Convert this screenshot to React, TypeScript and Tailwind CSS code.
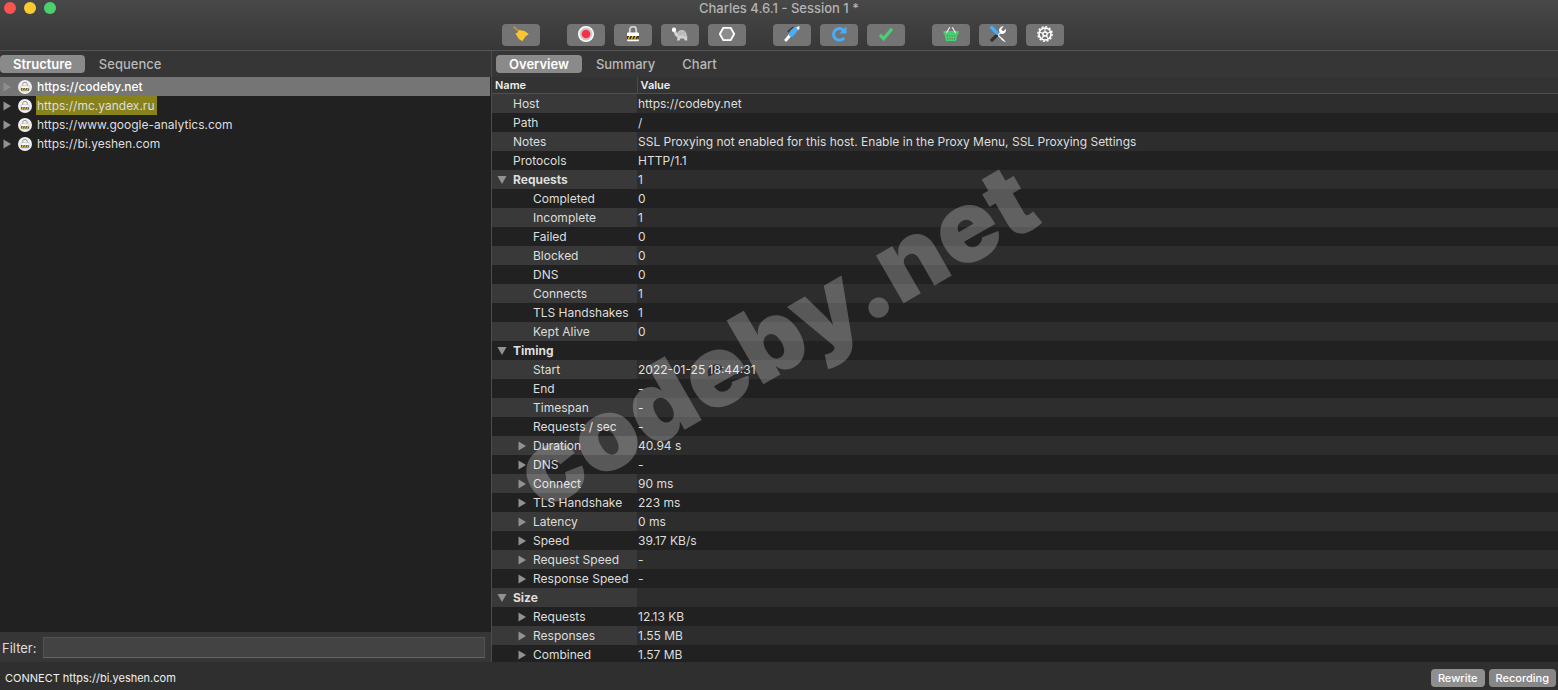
import { useState, type ReactNode } from "react";
import clsx from "clsx";

interface DetailRow {
  name: string;
  value: string;
  level: 0 | 1;
  toggle?: "open" | "closed";
}

interface HostEntry {
  url: string;
  highlighted?: boolean;
}

interface Tool {
  label: string;
  icon: ReactNode;
}

const hosts: HostEntry[] = [
  { url: "https://codeby.net" },
  { url: "https://mc.yandex.ru", highlighted: true },
  { url: "https://www.google-analytics.com" },
  { url: "https://bi.yeshen.com" },
];

const details: DetailRow[] = [
  { name: "Host", value: "https://codeby.net", level: 0 },
  { name: "Path", value: "/", level: 0 },
  {
    name: "Notes",
    value: "SSL Proxying not enabled for this host. Enable in the Proxy Menu, SSL Proxying Settings",
    level: 0,
  },
  { name: "Protocols", value: "HTTP/1.1", level: 0 },
  { name: "Requests", value: "1", level: 0, toggle: "open" },
  { name: "Completed", value: "0", level: 1 },
  { name: "Incomplete", value: "1", level: 1 },
  { name: "Failed", value: "0", level: 1 },
  { name: "Blocked", value: "0", level: 1 },
  { name: "DNS", value: "0", level: 1 },
  { name: "Connects", value: "1", level: 1 },
  { name: "TLS Handshakes", value: "1", level: 1 },
  { name: "Kept Alive", value: "0", level: 1 },
  { name: "Timing", value: "", level: 0, toggle: "open" },
  { name: "Start", value: "2022-01-25 18:44:31", level: 1 },
  { name: "End", value: "-", level: 1 },
  { name: "Timespan", value: "-", level: 1 },
  { name: "Requests / sec", value: "-", level: 1 },
  { name: "Duration", value: "40.94 s", level: 1, toggle: "closed" },
  { name: "DNS", value: "-", level: 1, toggle: "closed" },
  { name: "Connect", value: "90 ms", level: 1, toggle: "closed" },
  { name: "TLS Handshake", value: "223 ms", level: 1, toggle: "closed" },
  { name: "Latency", value: "0 ms", level: 1, toggle: "closed" },
  { name: "Speed", value: "39.17 KB/s", level: 1, toggle: "closed" },
  { name: "Request Speed", value: "-", level: 1, toggle: "closed" },
  { name: "Response Speed", value: "-", level: 1, toggle: "closed" },
  { name: "Size", value: "", level: 0, toggle: "open" },
  { name: "Requests", value: "12.13 KB", level: 1, toggle: "closed" },
  { name: "Responses", value: "1.55 MB", level: 1, toggle: "closed" },
  { name: "Combined", value: "1.57 MB", level: 1, toggle: "closed" },
];

function Icon({ children }: { children: ReactNode }) {
  return (
    <svg viewBox="0 0 16 16" className="size-4" fill="none" aria-hidden="true">
      {children}
    </svg>
  );
}

const toolGroups: Tool[][] = [
  [
    {
      label: "Clear session",
      icon: (
        <Icon>
          <path d="M1 1.2 6 5.4" stroke="#c98a3c" strokeWidth="1.8" strokeLinecap="round" />
          <path d="M1.6 1 4 3" stroke="#6fbf73" strokeWidth="0.8" />
          <path d="M6 4 11.4 5 15.8 8 12.2 10.8 9.4 15.2 5.9 12.9 2.4 7.6 4.4 6.8Z" fill="#fbc62d" />
        </Icon>
      ),
    },
  ],
  [
    {
      label: "Record",
      icon: (
        <Icon>
          <circle cx="8" cy="8" r="7.2" fill="#c9c9c9" stroke="#fff" strokeWidth="1.6" />
          <circle cx="8" cy="8" r="4.3" fill="#f7304a" />
        </Icon>
      ),
    },
    {
      label: "SSL proxying",
      icon: (
        <Icon>
          <path d="M4.8 7.5V3.8a3.2 3.2 0 0 1 6.4 0v3.7" stroke="#d4d4d4" strokeWidth="1.8" />
          <rect x="2" y="6.4" width="12" height="8.8" rx="1" fill="#fff" />
          <path d="M2 10h12v3.4H2z" fill="#2b2b2b" />
          <path d="m2.4 13.4 1.6-3.4h1.4l-1.6 3.4zm3.2 0L7.2 10h1.4L7 13.4zm3.2 0 1.6-3.4h1.4l-1.6 3.4zm3.2 0 1.2-2.6v2.6z" fill="#f4c51f" />
        </Icon>
      ),
    },
    {
      label: "Throttle",
      icon: (
        <Icon>
          <path d="M4.8 9.8C4.8 5.4 7.2 4 10 4S14.7 6.2 14.9 10.2Z" fill="#c2c2c2" />
          <path d="M6.8 7h6M9 4.8v4.8M12 5v4.6" stroke="#a3a3a3" strokeWidth="0.4" />
          <path d="M3.8 4.2 6 9.4l9.8 1-.8 1.3.4 2.7h-2.8l-.6-1.8H8.4l-.8 1.8H4.8l.8-2.7L3 9.4 1.6 6Z" fill="#d2d2d2" />
          <circle cx="2" cy="3.8" r="2.2" fill="#fafafa" />
        </Icon>
      ),
    },
    {
      label: "Breakpoints",
      icon: (
        <Icon>
          <path d="M4.3 1.9h7.4L15.2 8l-3.5 6.1H4.3L.8 8Z" fill="#8c8c8c" stroke="#fff" strokeWidth="1.9" />
        </Icon>
      ),
    },
  ],
  [
    {
      label: "Compose",
      icon: (
        <Icon>
          <path d="M3.8 6.2C5.4 3.6 7.6 1.8 10.4 1" stroke="#333" strokeWidth="1.3" />
          <path d="m2 14 5-6" stroke="#fff" strokeWidth="3" strokeLinecap="round" />
          <path d="m7.4 8.4 4-5" stroke="#47aefb" strokeWidth="5" strokeLinecap="round" />
          <path d="M12.3 1.2 15.4 0v3l-1.2 1.2Z" fill="#fff" />
        </Icon>
      ),
    },
    {
      label: "Repeat",
      icon: (
        <Icon>
          <path d="M12.4 4.2A5.8 5.8 0 1 0 13 11.8" stroke="#47aefb" strokeWidth="2.9" />
          <path d="M15.4.6v7H8.4Z" fill="#47aefb" />
        </Icon>
      ),
    },
    {
      label: "Validate",
      icon: (
        <Icon>
          <path d="m2 8.8 3.6 4L14 2.8" stroke="#48cf70" strokeWidth="3.3" />
        </Icon>
      ),
    },
  ],
  [
    {
      label: "Purchase",
      icon: (
        <Icon>
          <path d="M.5 5h15v3h-1l-1.4 7H2.9L1.5 8h-1Z" fill="#48cf70" />
          <path d="M3.4 6.8 6.8 1.2M12.6 6.8 9.2 1.2" stroke="#f0f0f0" strokeWidth="1.2" />
          <path d="M4.5 9v1.6M7 9v1.6M9.3 9v1.6M11.7 9v1.6M4.8 12v1.6M7 12v1.6M9.3 12v1.6M11.4 12v1.6" stroke="#5c7d64" strokeWidth="0.8" />
        </Icon>
      ),
    },
    {
      label: "Tools",
      icon: (
        <Icon>
          <path d="m7.3 8.4 6.4 6.2" stroke="#f5f5f5" strokeWidth="1.4" />
          <path d="m12 12.4 3.7 3.2-1 .4-3.5-2.8Z" fill="#fff" />
          <path d="m2 14 4.4-4.2" stroke="#333" strokeWidth="3.4" strokeLinecap="round" />
          <path d="m1.6 1.4 5.4 5.8" stroke="#47aefb" strokeWidth="3.4" strokeLinecap="round" />
          <path d="m8 8.5 1.7-2a4 4 0 0 1 4-6.1l-2.3 2.4.4 1.8 1.8.4 2.3-2.2a4 4 0 0 1-5.7 4.6l-1.5 1.8Z" fill="#fff" />
        </Icon>
      ),
    },
    {
      label: "Settings",
      icon: (
        <Icon>
          <circle cx="8" cy="8" r="6" stroke="#fff" strokeWidth="1.6" />
          <circle cx="8" cy="8" r="7.2" stroke="#fff" strokeWidth="1.4" strokeDasharray="2.2 1.57" />
          <circle cx="8" cy="8" r="2.1" stroke="#fff" strokeWidth="1.5" />
          <path d="M8 2v4M2.3 6.1l3.8 1.3M4.5 12.9l2.3-3.3M11.5 12.9 9.2 9.6M13.7 6.1 9.9 7.4" stroke="#fff" strokeWidth="1.1" />
        </Icon>
      ),
    },
  ],
];

function Triangle({ open, dim }: { open?: boolean; dim?: boolean }) {
  return (
    <svg
      viewBox="0 0 10 10"
      className={clsx("block size-2.5 shrink-0", dim ? "text-[#8e8e8e]" : "text-[#929292]")}
      aria-hidden="true"
    >
      <path d={open ? "M.5 1h9L5 9Z" : "M1.5 .5v9l7.5-4.5Z"} fill="currentColor" />
    </svg>
  );
}

function LockBadge() {
  return (
    <svg viewBox="0 0 14 14" className="block size-3.5 shrink-0" aria-hidden="true">
      <circle cx="7" cy="7" r="7" fill="#f0f0f0" />
      <path d="M4.7 6.2V4.6a2.3 2.3 0 0 1 4.6 0v1.6" fill="none" stroke="#9a9a9a" strokeWidth="1" />
      <rect x="3" y="5.8" width="8" height="5.2" rx="0.6" fill="#fff" stroke="#b4b4b4" strokeWidth="0.6" />
      <path d="M3 8h8v2.6H3z" fill="#5c5c4a" />
      <path d="m3.4 10.6 1.2-2.6h1.2l-1.2 2.6zm2.5 0L7.1 8h1.2l-1.2 2.6zm2.5 0L9.6 8h1.2l-1.2 2.6z" fill="#d8c038" />
    </svg>
  );
}

interface TabBarProps {
  tabs: string[];
  active: string;
  onSelect: (tab: string) => void;
}

function TabBar({ tabs, active, onSelect }: TabBarProps) {
  return (
    <div role="tablist" className="flex h-[26px] shrink-0 items-center gap-px bg-[#363636]">
      {tabs.map((tab) => (
        <button
          key={tab}
          type="button"
          role="tab"
          aria-selected={tab === active}
          onClick={() => onSelect(tab)}
          className={clsx(
            "h-[18px] rounded px-[13px] text-[13px] leading-[18px]",
            tab === active ? "bg-[#8a8a8a] font-semibold text-white" : "font-medium text-[#b9b9b9]"
          )}
        >
          {tab}
        </button>
      ))}
    </div>
  );
}

function Toolbar() {
  return (
    <header className="shrink-0 border-b border-[#555] bg-linear-to-b from-[#484848] to-[#373737]">
      <div className="relative flex h-[18px] items-start justify-center">
        <div className="absolute top-0.5 left-1 flex gap-2">
          <button type="button" aria-label="Close" className="size-3 rounded-full bg-[#f8554f]" />
          <button type="button" aria-label="Minimize" className="size-3 rounded-full bg-[#fdca30]" />
          <button type="button" aria-label="Zoom" className="size-3 rounded-full bg-[#4bd06b]" />
        </div>
        <h1 className="text-[13px] leading-4 font-medium text-[#b4b4b4]">Charles 4.6.1 - Session 1 *</h1>
      </div>
      <div className="flex h-8 items-center justify-center gap-[27px] pt-1.5 pb-1 pl-2">
        {toolGroups.map((group, index) => (
          <div key={index} className="flex gap-[9px]">
            {group.map((tool) => (
              <button
                key={tool.label}
                type="button"
                aria-label={tool.label}
                className="flex h-[22px] w-[38px] items-center justify-center rounded bg-[#747474] pb-0.5"
              >
                {tool.icon}
              </button>
            ))}
          </div>
        ))}
      </div>
    </header>
  );
}

function HostPanel() {
  const [tab, setTab] = useState("Structure");
  const [selected, setSelected] = useState(hosts[0].url);

  return (
    <section className="flex min-h-0 w-[492px] shrink-0 flex-col border-r border-[#4b4b4b] bg-[#363636]">
      <TabBar tabs={["Structure", "Sequence"]} active={tab} onSelect={setTab} />
      <ul className="min-h-0 flex-1 overflow-hidden bg-[#212121] pr-px">
        {hosts.map((host) => (
          <li key={host.url}>
            <button
              type="button"
              onClick={() => setSelected(host.url)}
              className={clsx(
                "flex h-[19px] w-full items-center px-0.5 text-left text-[#dedede]",
                selected === host.url && "bg-[#757575] font-medium text-white"
              )}
            >
              <Triangle dim={selected === host.url} />
              <span className="pr-1 pl-1.5">
                <LockBadge />
              </span>
              <span className={clsx("pr-[3px] pl-px leading-[19px]", host.highlighted && "bg-[#87821c]")}>
                {host.url}
              </span>
            </button>
          </li>
        ))}
      </ul>
      <div className="flex h-[30px] shrink-0 items-center gap-1.5 pr-1.5 pl-0.5">
        <label htmlFor="filter" className="pt-1 text-[13px] text-[#dedede]">
          Filter:
        </label>
        <input
          id="filter"
          type="text"
          className="h-[21px] min-w-0 flex-1 border border-[#525252] border-b-[#666] bg-[#434343] px-1 text-white outline-none"
        />
      </div>
    </section>
  );
}

function DetailTable() {
  return (
    <div className="min-h-0 flex-1 overflow-hidden bg-[#212121]">
      <table className="w-full table-fixed border-collapse text-left text-[#dedede]">
        <thead>
          <tr className="h-4 border-b border-[#4f4f4f] bg-[#333] text-[11px] leading-4 text-[#eee]">
            <th className="w-[145px] border-r border-[#4b4b4b] p-0 pl-[3px] font-semibold">Name</th>
            <th className="p-0 pl-[3px] font-semibold">Value</th>
          </tr>
        </thead>
        <tbody>
          {details.map((row, index) => (
            <tr key={index} className="h-[19px] leading-[19px]">
              <th
                scope="row"
                className={clsx(
                  "p-0",
                  row.level === 0 ? "pl-[5px]" : "pl-[25px]",
                  index % 2 === 0 && "bg-[#393939]",
                  row.toggle === "open" ? "font-bold" : "font-normal"
                )}
              >
                <span className="flex items-center gap-1.5 whitespace-nowrap">
                  <span className="w-2.5">{row.toggle && <Triangle open={row.toggle === "open"} />}</span>
                  {row.name}
                </span>
              </th>
              <td className={clsx("p-0 pl-px whitespace-nowrap", index % 2 === 0 && "bg-[#2d2d2d]")}>{row.value}</td>
            </tr>
          ))}
        </tbody>
      </table>
    </div>
  );
}

function DetailPanel() {
  const [tab, setTab] = useState("Overview");

  return (
    <section className="flex min-h-0 min-w-0 flex-1 flex-col bg-[#363636]">
      <div className="pl-1">
        <TabBar tabs={["Overview", "Summary", "Chart"]} active={tab} onSelect={setTab} />
      </div>
      <DetailTable />
    </section>
  );
}

function StatusBar() {
  return (
    <footer className="flex h-7 shrink-0 items-center justify-between bg-[#2f2f2f] pt-1 pr-0.5 pl-[5px] text-[11px] text-[#f0f0f0]">
      <p>CONNECT https://bi.yeshen.com</p>
      <div className="flex gap-1 font-medium text-white">
        <button type="button" className="h-[18px] rounded bg-[#8f8f8f] px-[7px]">
          Rewrite
        </button>
        <button type="button" className="h-[18px] rounded bg-[#878787] px-[7px]">
          Recording
        </button>
      </div>
    </footer>
  );
}

export default function App() {
  return (
    <div className="relative flex h-screen flex-col overflow-hidden bg-[#212121] font-['Inter',sans-serif] text-[12px]">
      <Toolbar />
      <main className="flex min-h-0 flex-1">
        <HostPanel />
        <DetailPanel />
      </main>
      <StatusBar />
      <div
        className="pointer-events-none absolute inset-0 flex items-center justify-center pr-2 pb-5"
        aria-hidden="true"
      >
        <span className="-rotate-30 text-[101px] leading-none font-black text-white/25">codeby.net</span>
      </div>
    </div>
  );
}
